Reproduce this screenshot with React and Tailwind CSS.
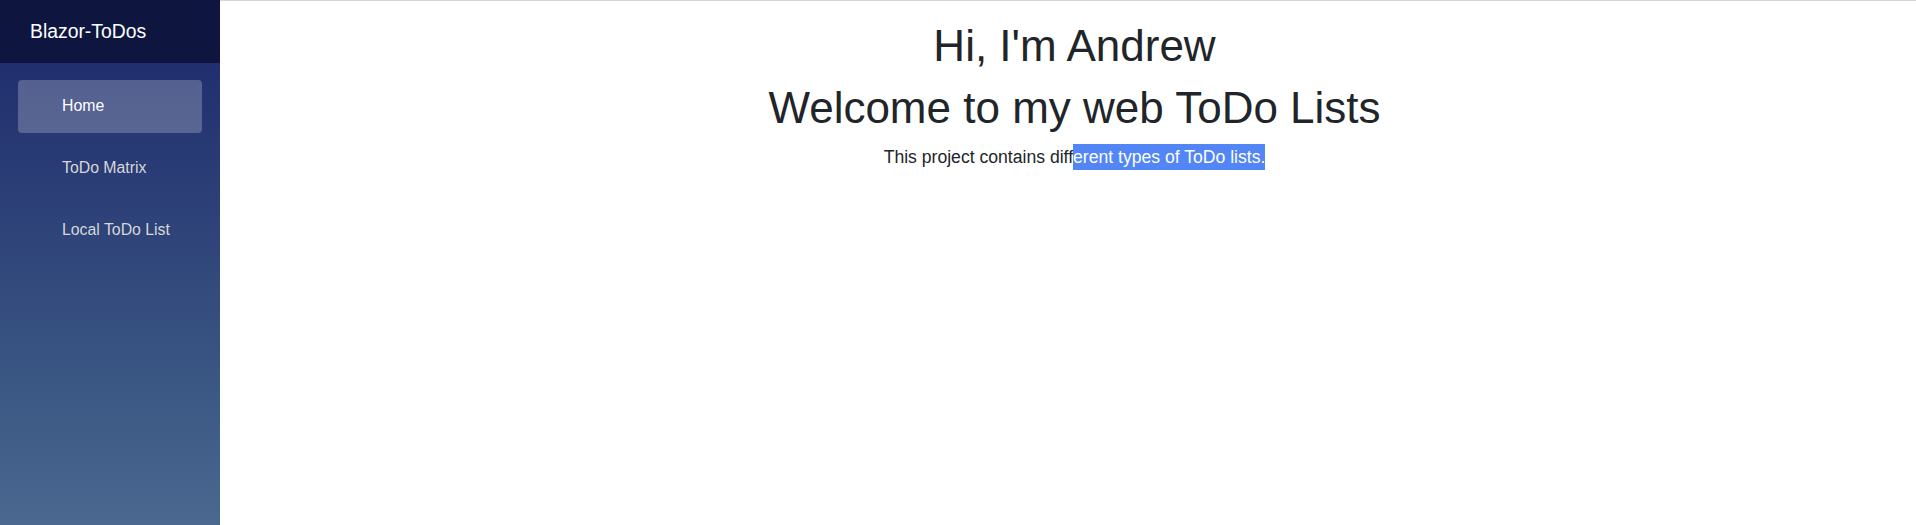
export default function App() {
  const items = [
    { label: "Home", active: true },
    { label: "ToDo Matrix", active: false },
    { label: "Local ToDo List", active: false },
  ];
  return (
    <div className="flex h-[525px] w-full overflow-hidden font-['Liberation_Sans',Arial,sans-serif]">
      <aside className="flex w-[220px] shrink-0 flex-col bg-[linear-gradient(180deg,#1c276a_0%,#3a5683_72%,#4a6890_100%)]">
        <div className="flex h-[62.6px] shrink-0 items-center bg-[#0e1640] pl-[30px] pt-[1px] text-[19.36px] text-white">
          Blazor-ToDos
        </div>
        <nav className="flex flex-col pt-[17.8px]">
          {items.map((it) =>
            it.active ? (
              <div key={it.label} className="px-[17.6px] pb-[9px]">
                <a className="flex h-[52.8px] items-center rounded-[4px] bg-white/[0.23] pl-[44.4px] text-[15.84px] leading-[52.8px] text-white">
                  {it.label}
                </a>
              </div>
            ) : (
              <div key={it.label} className="px-[17.6px] pb-[9px]">
                <a className="flex h-[52.8px] items-center rounded-[4px] pl-[44.4px] text-[15.84px] leading-[52.8px] text-[#d7d7d7]">
                  {it.label}
                </a>
              </div>
            )
          )}
        </nav>
      </aside>
      <main className="flex-1 border-t border-[#d6d5d5] pl-[36px] pr-[23px] pt-[19.36px] text-center text-[#212529]">
        <h1 className="mb-[8.8px] text-[44px] font-normal leading-[1.2]">Hi, I'm Andrew</h1>
        <h1 className="mb-[8.8px] text-[44px] font-normal leading-[1.2]">Welcome to my web ToDo Lists</h1>
        <p className="text-[17.6px] leading-[1.5]">
          This project contains diff
          <span className="bg-[#5285f6] py-[3px] text-white">erent types of ToDo lists.</span>
        </p>
      </main>
    </div>
  );
}
